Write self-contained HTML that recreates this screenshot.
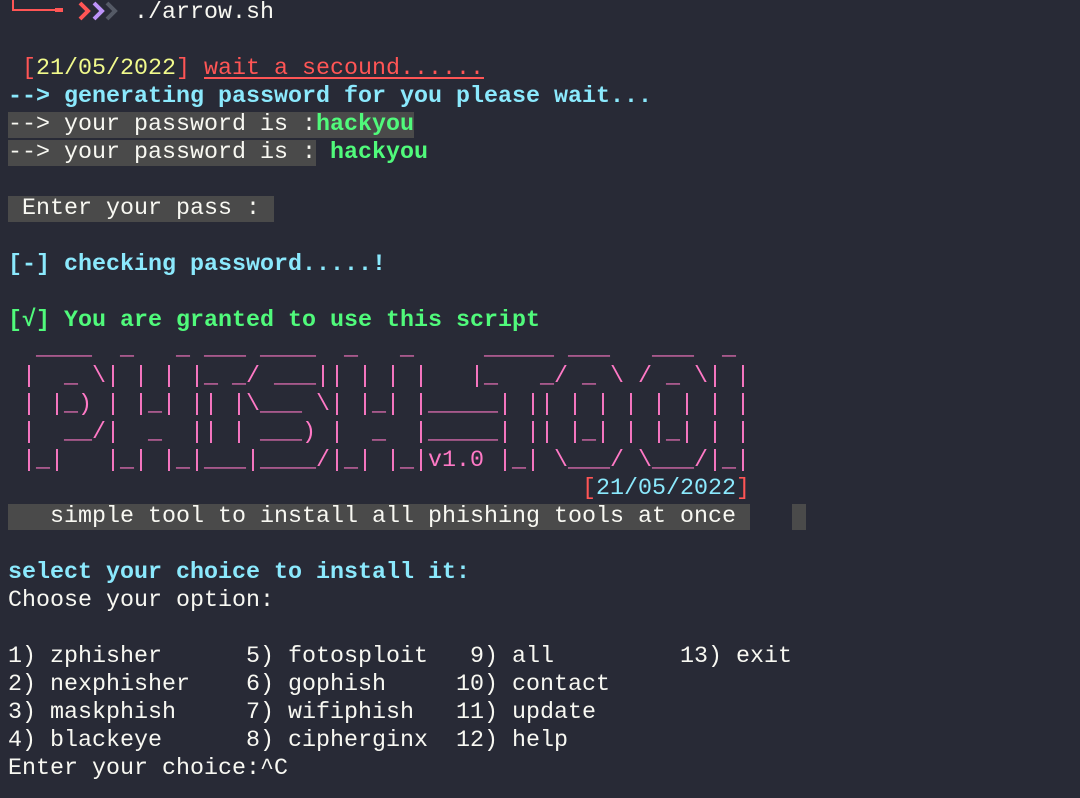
<!DOCTYPE html>
<html><head><meta charset="utf-8"><style>
html,body{margin:0;padding:0;width:1080px;height:798px;overflow:hidden;background:#282a36;}
pre{position:absolute;left:8px;top:-1px;margin:0;font-family:"Liberation Mono",monospace;font-size:23.33px;line-height:28px;color:#f8f8f2;white-space:pre;}
.r{color:#ff5555}.y{color:#f1fa8c}.c{color:#8be9fd}.g{color:#50fa7b}.p{color:#ff79c6}.b{font-weight:bold}
.bg{background:#4a4a4a}.u{text-decoration:underline;text-underline-offset:3px}
svg{position:absolute;left:0;top:0}
</style></head><body>
<svg width="130" height="28">
<path d="M13 0 V10 H55" stroke="#ff5555" stroke-width="2" fill="none"/><rect x="55" y="8" width="8" height="4" fill="#ff5555"/>
<path d="M80 3 L88 11 L80 19" stroke="#ff5555" stroke-width="4" fill="none"/>
<path d="M94 3 L102 11 L94 19" stroke="#bd93f9" stroke-width="4" fill="none"/>
<path d="M107 3 L115 11 L107 19" stroke="#555a66" stroke-width="4" fill="none"/>
</svg>
<pre>         ./arrow.sh

 <span class="r">[</span><span class="y">21/05/2022</span><span class="r">]</span> <span class="r u">wait a secound......</span>
<span class="c b">--&gt; generating password for you please wait...</span>
<span class="bg">--&gt; your password is :<span class="g b">hackyou</span></span>
<span class="bg">--&gt; your password is :</span> <span class="g b">hackyou</span>

<span class="bg"> Enter your pass : </span>

<span class="c b">[-] checking password.....!</span>

<span class="g b">[√] You are granted to use this script</span>
<span class="p">  ____  _   _ ___ ____  _   _     _____ ___   ___  _
 |  _ \| | | |_ _/ ___|| | | |   |_   _/ _ \ / _ \| |
 | |_) | |_| || |\___ \| |_| |_____| || | | | | | | |
 |  __/|  _  || | ___) |  _  |_____| || |_| | |_| | |
 |_|   |_| |_|___|____/|_| |_|v1.0 |_| \___/ \___/|_|</span>
                                         <span class="r">[</span><span class="c">21/05/2022</span><span class="r">]</span>
<span class="bg">   simple tool to install all phishing tools at once </span>   <span class="bg"> </span>

<span class="c b">select your choice to install it:</span>
Choose your option:

1) zphisher      5) fotosploit   9) all         13) exit
2) nexphisher    6) gophish     10) contact
3) maskphish     7) wifiphish   11) update
4) blackeye      8) cipherginx  12) help
Enter your choice:^C</pre>
</body></html>
